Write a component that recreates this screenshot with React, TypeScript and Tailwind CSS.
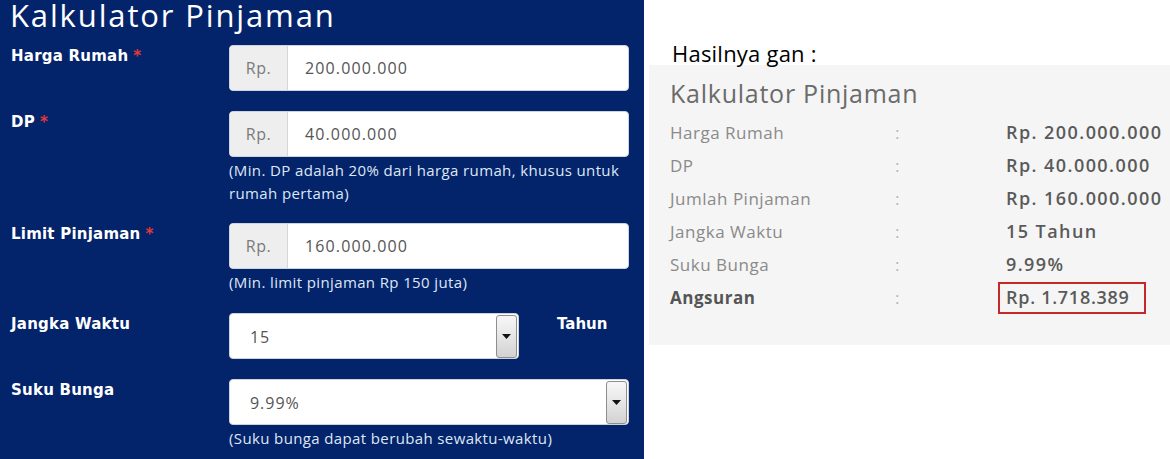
import React from "react";

const GEO = "font-['Open_Sans',sans-serif]";

function Label({ text, required }: { text: string; required?: boolean }) {
  return (
    <div className="w-[229px] shrink-0 pt-[1px] pl-[11px] font-['DejaVu_Sans',sans-serif] text-[15px] font-bold leading-[20px] tracking-[0.015em] text-white">
      {text}
      {required && <span className="ml-[5px] text-[#e53935]">*</span>}
    </div>
  );
}

function MoneyInput({ value }: { value: string }) {
  return (
    <div className="flex h-[46px] w-[400px] overflow-hidden rounded-[4px] border border-[#cfd4dc] bg-white">
      <div className={`flex w-[58px] items-center justify-center border-r border-[#d6d6d6] bg-[#eeeeee] text-[16px] tracking-[0.03em] text-[#7a7a7a] ${GEO}`}>
        Rp.
      </div>
      <div className={`flex items-center pl-[17px] text-[16px] tracking-[0.07em] text-[#555] ${GEO}`}>
        {value}
      </div>
    </div>
  );
}

function SelectBox({ value, width }: { value: string; width: string }) {
  return (
    <div className={`flex h-[46px] ${width} items-center justify-between rounded-[4px] border border-[#cfd4dc] bg-white pl-[20px] pr-[1px]`}>
      <span className={`mt-[2px] text-[16px] tracking-[0.06em] text-[#555] ${GEO}`}>{value}</span>
      <div className="flex h-[43px] w-[21px] items-center justify-center rounded-[3px] border border-[#8e8e8e] bg-gradient-to-b from-[#f7f7f7] via-[#e6e6e6] to-[#d2d2d2]">
        <svg width="9" height="5" viewBox="0 0 9 5">
          <path d="M0 0 L9 0 L4.5 5 Z" fill="#111" />
        </svg>
      </div>
    </div>
  );
}

function Help({ children }: { children: React.ReactNode }) {
  return (
    <p className={`w-[400px] pt-[2px] text-[15px] leading-[23px] tracking-[0.025em] text-[#dfe7f5] ${GEO}`}>{children}</p>
  );
}

const rows = [
  { label: "Harga Rumah", value: "Rp. 200.000.000" },
  { label: "DP", value: "Rp. 40.000.000" },
  { label: "Jumlah Pinjaman", value: "Rp. 160.000.000" },
  { label: "Jangka Waktu", value: "15 Tahun" },
  { label: "Suku Bunga", value: "9.99%" },
];

export default function App() {
  return (
    <div className="flex h-[459px] w-[1170px] overflow-hidden bg-white">
      {/* form panel */}
      <div className="flex h-full w-[644px] shrink-0 flex-col bg-[#03236b]">
        <h1 className={`pl-[10px] text-[31px] leading-[30px] tracking-[0.06em] text-white ${GEO}`}>
          Kalkulator Pinjaman
        </h1>

        <div className="mt-[15px] flex">
          <Label text="Harga Rumah" required />
          <MoneyInput value="200.000.000" />
        </div>

        <div className="mt-[20px] flex">
          <Label text="DP" required />
          <div className="flex flex-col">
            <MoneyInput value="40.000.000" />
            <Help>(Min. DP adalah 20% dari harga rumah, khusus untuk rumah pertama)</Help>
          </div>
        </div>

        <div className="mt-[18px] flex">
          <Label text="Limit Pinjaman" required />
          <div className="flex flex-col">
            <MoneyInput value="160.000.000" />
            <Help>(Min. limit pinjaman Rp 150 juta)</Help>
          </div>
        </div>

        <div className="mt-[19px] flex">
          <Label text="Jangka Waktu" />
          <SelectBox value="15" width="w-[290px]" />
          <div className="ml-[38px] pt-[1px] font-['DejaVu_Sans',sans-serif] text-[15px] font-bold leading-[20px] text-white">
            Tahun
          </div>
        </div>

        <div className="mt-[20px] flex">
          <Label text="Suku Bunga" />
          <div className="flex flex-col">
            <SelectBox value="9.99%" width="w-[400px]" />
            <Help>(Suku bunga dapat berubah sewaktu-waktu)</Help>
          </div>
        </div>
      </div>

      {/* result panel */}
      <div className="flex flex-1 flex-col pl-[5px]">
        <div className="relative z-10 h-[65px] pl-[23px] pt-[41px] font-['Open_Sans',sans-serif] text-[22px] leading-[24px] tracking-[0.01em] text-black">
          Hasilnya gan :
        </div>
        <div className={`h-[280px] bg-[#f5f5f5] pl-[21px] ${GEO}`}>
          <div className="pt-[11px] text-[25px] leading-[34px] tracking-[0.03em] text-[#6b6b6b]">
            Kalkulator Pinjaman
          </div>
          <div className="mt-[6px] flex flex-col">
            {rows.map((r) => (
              <div key={r.label} className="flex h-[33px] items-center text-[17px] tracking-[0.03em]">
                <span className="w-[225px] text-[#8a8a8a]">{r.label}</span>
                <span className="w-[111px] text-[#b5b5b5]">:</span>
                <span className="text-[18px] font-semibold tracking-[0.08em] text-[#5a5a5a]">{r.value}</span>
              </div>
            ))}
            <div className="flex h-[33px] items-center text-[17px] tracking-[0.03em]">
              <span className="w-[225px] font-bold text-[#555]">Angsuran</span>
              <span className="w-[103px] text-[#b5b5b5]">:</span>
              <span className="flex h-[32px] w-[148px] items-center border-2 border-[#c62828] pl-[6px] text-[18px] font-semibold tracking-[0.04em] text-[#5a5a5a]">
                Rp. 1.718.389
              </span>
            </div>
          </div>
        </div>
      </div>
    </div>
  );
}
